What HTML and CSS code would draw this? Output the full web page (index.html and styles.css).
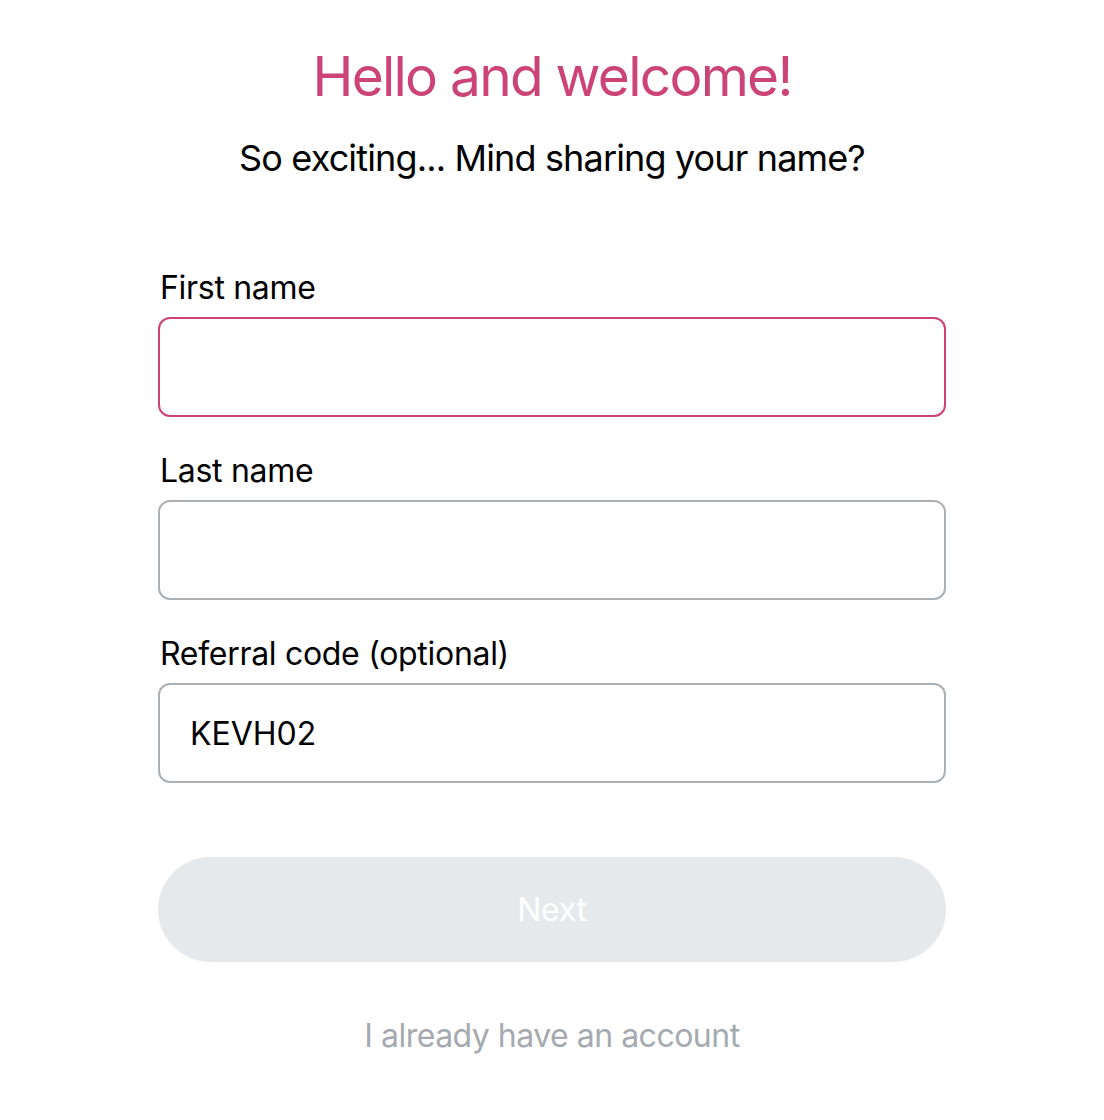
FILE: index.html
```html
<!DOCTYPE html>
<html lang="en">
<head>
  <meta charset="UTF-8">
  <meta name="viewport" content="width=device-width, initial-scale=1.0">
  <title>Welcome</title>
  <link rel="stylesheet" href="styles.css">
</head>
<body>
  <div class="container">
    <h1>Hello and welcome!</h1>
    <p class="subtitle">So exciting... Mind sharing your name?</p>
    <form class="form">
      <div class="field">
        <label for="firstName">First name</label>
        <input type="text" id="firstName" class="input focused">
      </div>
      <div class="field">
        <label for="lastName">Last name</label>
        <input type="text" id="lastName" class="input">
      </div>
      <div class="field">
        <label for="referral">Referral code (optional)</label>
        <input type="text" id="referral" class="input" value="KEVH02">
      </div>
      <button type="button" class="next-btn" disabled>Next</button>
    </form>
    <a href="#" class="login-link">I already have an account</a>
  </div>
</body>
</html>
```

FILE: styles.css
```css
* {
  margin: 0;
  padding: 0;
  box-sizing: border-box;
}
body {
  font-family: Inter, 'Noto Sans', sans-serif;
  background: #fff;
  color: #000;
}
.container {
  width: 788px;
  margin: 0 auto;
  padding-top: 38px;
  display: flex;
  flex-direction: column;
  align-items: center;
}
h1 {
  font-size: 55px;
  font-weight: 400;
  color: #cc4477;
  letter-spacing: -1.75px;
  line-height: 76px;
}
.subtitle {
  font-size: 36px;
  line-height: 50px;
  margin-top: 19px;
  letter-spacing: -0.85px;
}
.form {
  width: 100%;
  margin-top: 85px;
  display: flex;
  flex-direction: column;
  gap: 34px;
}
.field {
  display: flex;
  flex-direction: column;
  gap: 9px;
}
label {
  font-size: 32px;
  line-height: 40px;
  padding-left: 2px;
  letter-spacing: -0.3px;
}
.input {
  width: 100%;
  height: 100px;
  border: 2px solid #aab1b6;
  border-radius: 12px;
  padding: 0 30px;
  font-family: inherit;
  font-size: 32px;
  color: #000;
  outline: none;
}
.input.focused {
  border-color: #cc4477;
}
.next-btn {
  margin-top: 40px;
  height: 105px;
  border: none;
  border-radius: 53px;
  background: #e6e9ec;
  color: #fff;
  font-family: inherit;
  font-size: 32px;
  letter-spacing: -0.3px;
}
.login-link {
  margin-top: 54px;
  font-size: 32px;
  line-height: 40px;
  color: #a4aaaf;
  text-decoration: none;
  letter-spacing: -0.5px;
}
```
